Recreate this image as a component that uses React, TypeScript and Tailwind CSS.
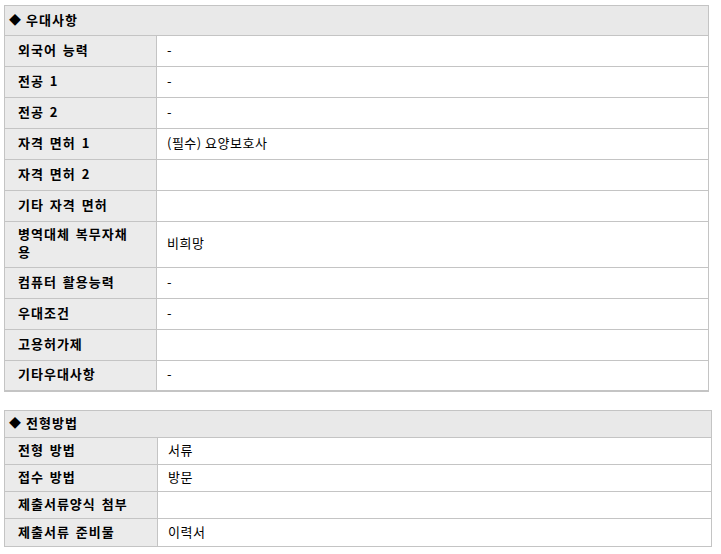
import React from "react";

interface Row {
  label: string;
  value: string;
  tall?: boolean;
}

const prefRows: Row[] = [
  { label: "외국어 능력", value: "-" },
  { label: "전공 1", value: "-" },
  { label: "전공 2", value: "-" },
  { label: "자격 면허 1", value: "(필수) 요양보호사" },
  { label: "자격 면허 2", value: "" },
  { label: "기타 자격 면허", value: "" },
  { label: "병역대체 복무자채용", value: "비희망", tall: true },
  { label: "컴퓨터 활용능력", value: "-" },
  { label: "우대조건", value: "-" },
  { label: "고용허가제", value: "" },
  { label: "기타우대사항", value: "-" },
];

const screenRows: Row[] = [
  { label: "전형 방법", value: "서류" },
  { label: "접수 방법", value: "방문" },
  { label: "제출서류양식 첨부", value: "" },
  { label: "제출서류 준비물", value: "이력서" },
];

const font = "font-['Noto_Sans_CJK_KR','Noto_Sans',sans-serif]";

const App: React.FC = () => {
  return (
    <div className={`w-[721px] h-[554px] bg-white pl-[4px] pt-[5px] text-black ${font}`}>
      {/* 우대사항 */}
      <div className="w-[705px] border border-b-2 border-[#c4c4c4]">
        <div className="h-[30px] flex items-center pl-[4px] pb-[2px] bg-[#e9e9e9] border-b border-[#c4c4c4] text-[13px] font-bold">
          <span className="mr-[5px] text-[12px]">◆</span>
          <span className="tracking-[1px]">우대사항</span>
        </div>
        {prefRows.map((row, i) => {
          const last = i === prefRows.length - 1;
          return (
            <div
              key={i}
              className={`flex ${row.tall ? "h-[46px]" : last ? "h-[29px]" : "h-[31px]"} ${
                last ? "" : "border-b border-[#c4c4c4]"
              }`}
            >
              <div className="w-[152px] shrink-0 flex items-center pb-[3px] bg-[#ebebeb] border-r border-[#c4c4c4] pl-[13px] text-[13px] font-bold tracking-[1px] [word-spacing:2px] leading-[18px]">
                <span className="w-[116px]">{row.label}</span>
              </div>
              <div className="flex-1 flex items-center pl-[10px] pb-[3px] text-[13px] tracking-[0.5px]">
                {row.value}
              </div>
            </div>
          );
        })}
      </div>

      {/* 전형방법 */}
      <div className="mt-[18px] w-[708px] border border-[#c4c4c4]">
        <div className="h-[27px] flex items-center pl-[4px] pb-[2px] bg-[#e9e9e9] border-b border-[#c4c4c4] text-[13px] font-bold">
          <span className="mr-[5px] text-[12px]">◆</span>
          <span className="tracking-[1px]">전형방법</span>
        </div>
        {screenRows.map((row, i) => (
          <div
            key={i}
            className={`flex h-[27px] ${
              i < screenRows.length - 1 ? "border-b border-[#c4c4c4]" : ""
            }`}
          >
            <div className="w-[153px] shrink-0 flex items-center pb-[2px] bg-[#ebebeb] border-r border-[#c4c4c4] pl-[13px] text-[13px] font-bold tracking-[1px] [word-spacing:2px]">
              {row.label}
            </div>
            <div className="flex-1 flex items-center pl-[10px] pb-[2px] text-[13px] tracking-[0.5px]">
              {row.value}
            </div>
          </div>
        ))}
      </div>
    </div>
  );
};

export default App;
